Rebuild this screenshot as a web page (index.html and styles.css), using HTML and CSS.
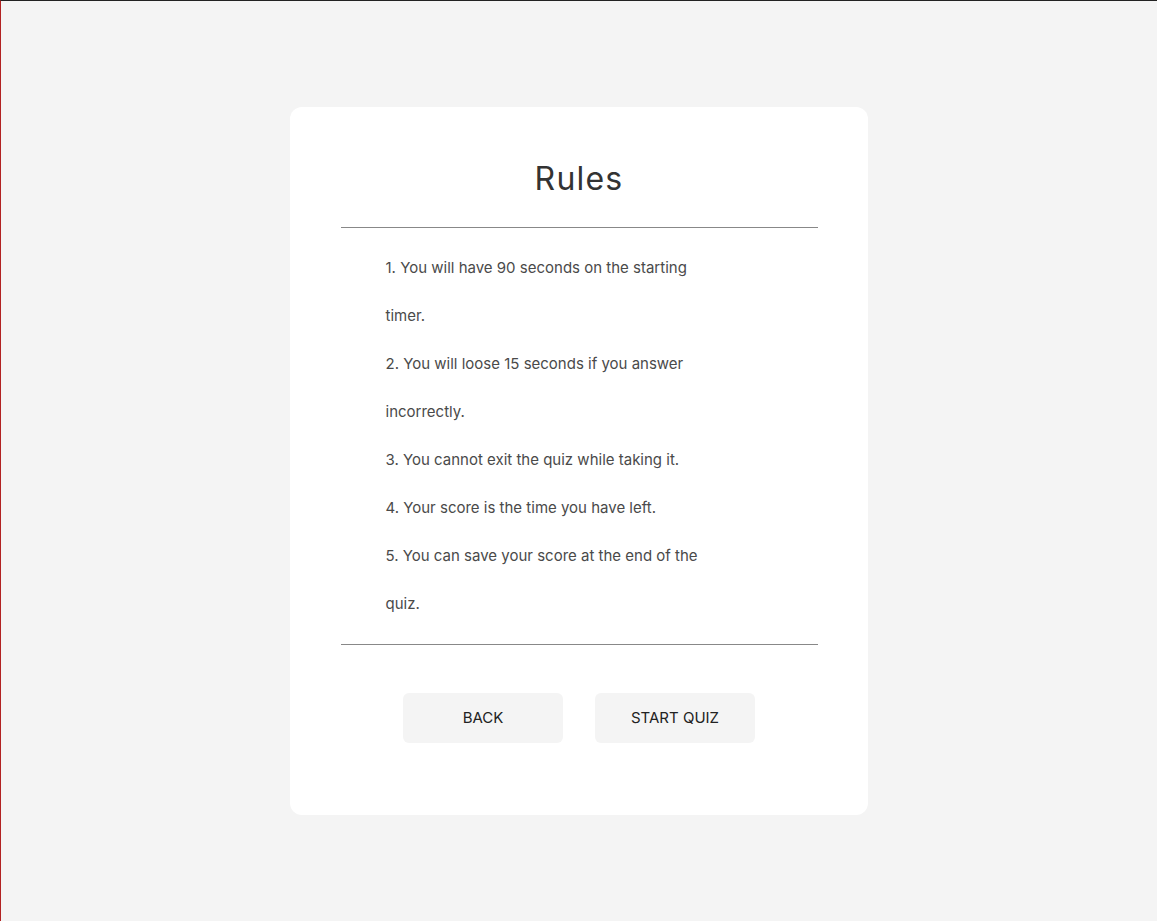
FILE: index.html
```html
<!DOCTYPE html>
<html lang="en">
<head>
<meta charset="utf-8">
<title>Rules</title>
<link rel="stylesheet" href="styles.css">
</head>
<body>
<main class="page">
  <section class="card">
    <h1 class="title">Rules</h1>
    <hr class="rule">
    <div class="rules-list">
      <p>1. You will have 90 seconds on the starting timer.</p>
      <p>2. You will loose 15 seconds if you answer incorrectly.</p>
      <p>3. You cannot exit the quiz while taking it.</p>
      <p>4. Your score is the time you have left.</p>
      <p>5. You can save your score at the end of the quiz.</p>
    </div>
    <hr class="rule rule-bottom">
    <div class="actions">
      <button class="btn">BACK</button>
      <button class="btn">START QUIZ</button>
    </div>
  </section>
</main>
</body>
</html>
```
FILE: styles.css
```css
html, body {
  margin: 0;
  padding: 0;
}
body {
  background: #f4f4f4;
  font-family: Inter, "Open Sans", sans-serif;
  border-top: 1px solid #222;
  border-left: 1px solid #b22222;
  min-height: 100vh;
  box-sizing: border-box;
}
.page {
  display: flex;
  justify-content: center;
  padding-top: 106px;
}
.card {
  width: 578px;
  box-sizing: border-box;
  background: #fff;
  border-radius: 12px;
  padding: 52px 50px 72px 51px;
  margin-left: -1px;
}
.title {
  margin: 0;
  text-align: center;
  font-size: 32px;
  line-height: 40px;
  font-weight: 400;
  letter-spacing: 1.2px;
  color: #333;
}
.rule {
  border: 0;
  border-top: 1px solid #888;
  margin: 28px 0 16px;
  height: 0;
}
.rule-bottom {
  margin: 16px 0 48px;
}
.rules-list {
  padding-left: 45px;
  width: 325px;
}
.rules-list p {
  margin: 0;
  font-size: 15px;
  line-height: 48px;
  color: #4a4a4a;
}
.actions {
  display: flex;
  justify-content: center;
  gap: 32px;
}
.btn {
  width: 160px;
  height: 50px;
  border: 0;
  border-radius: 6px;
  background: #f4f4f4;
  font-family: inherit;
  font-size: 15px;
  line-height: 48px;
  color: #222;
}
```
